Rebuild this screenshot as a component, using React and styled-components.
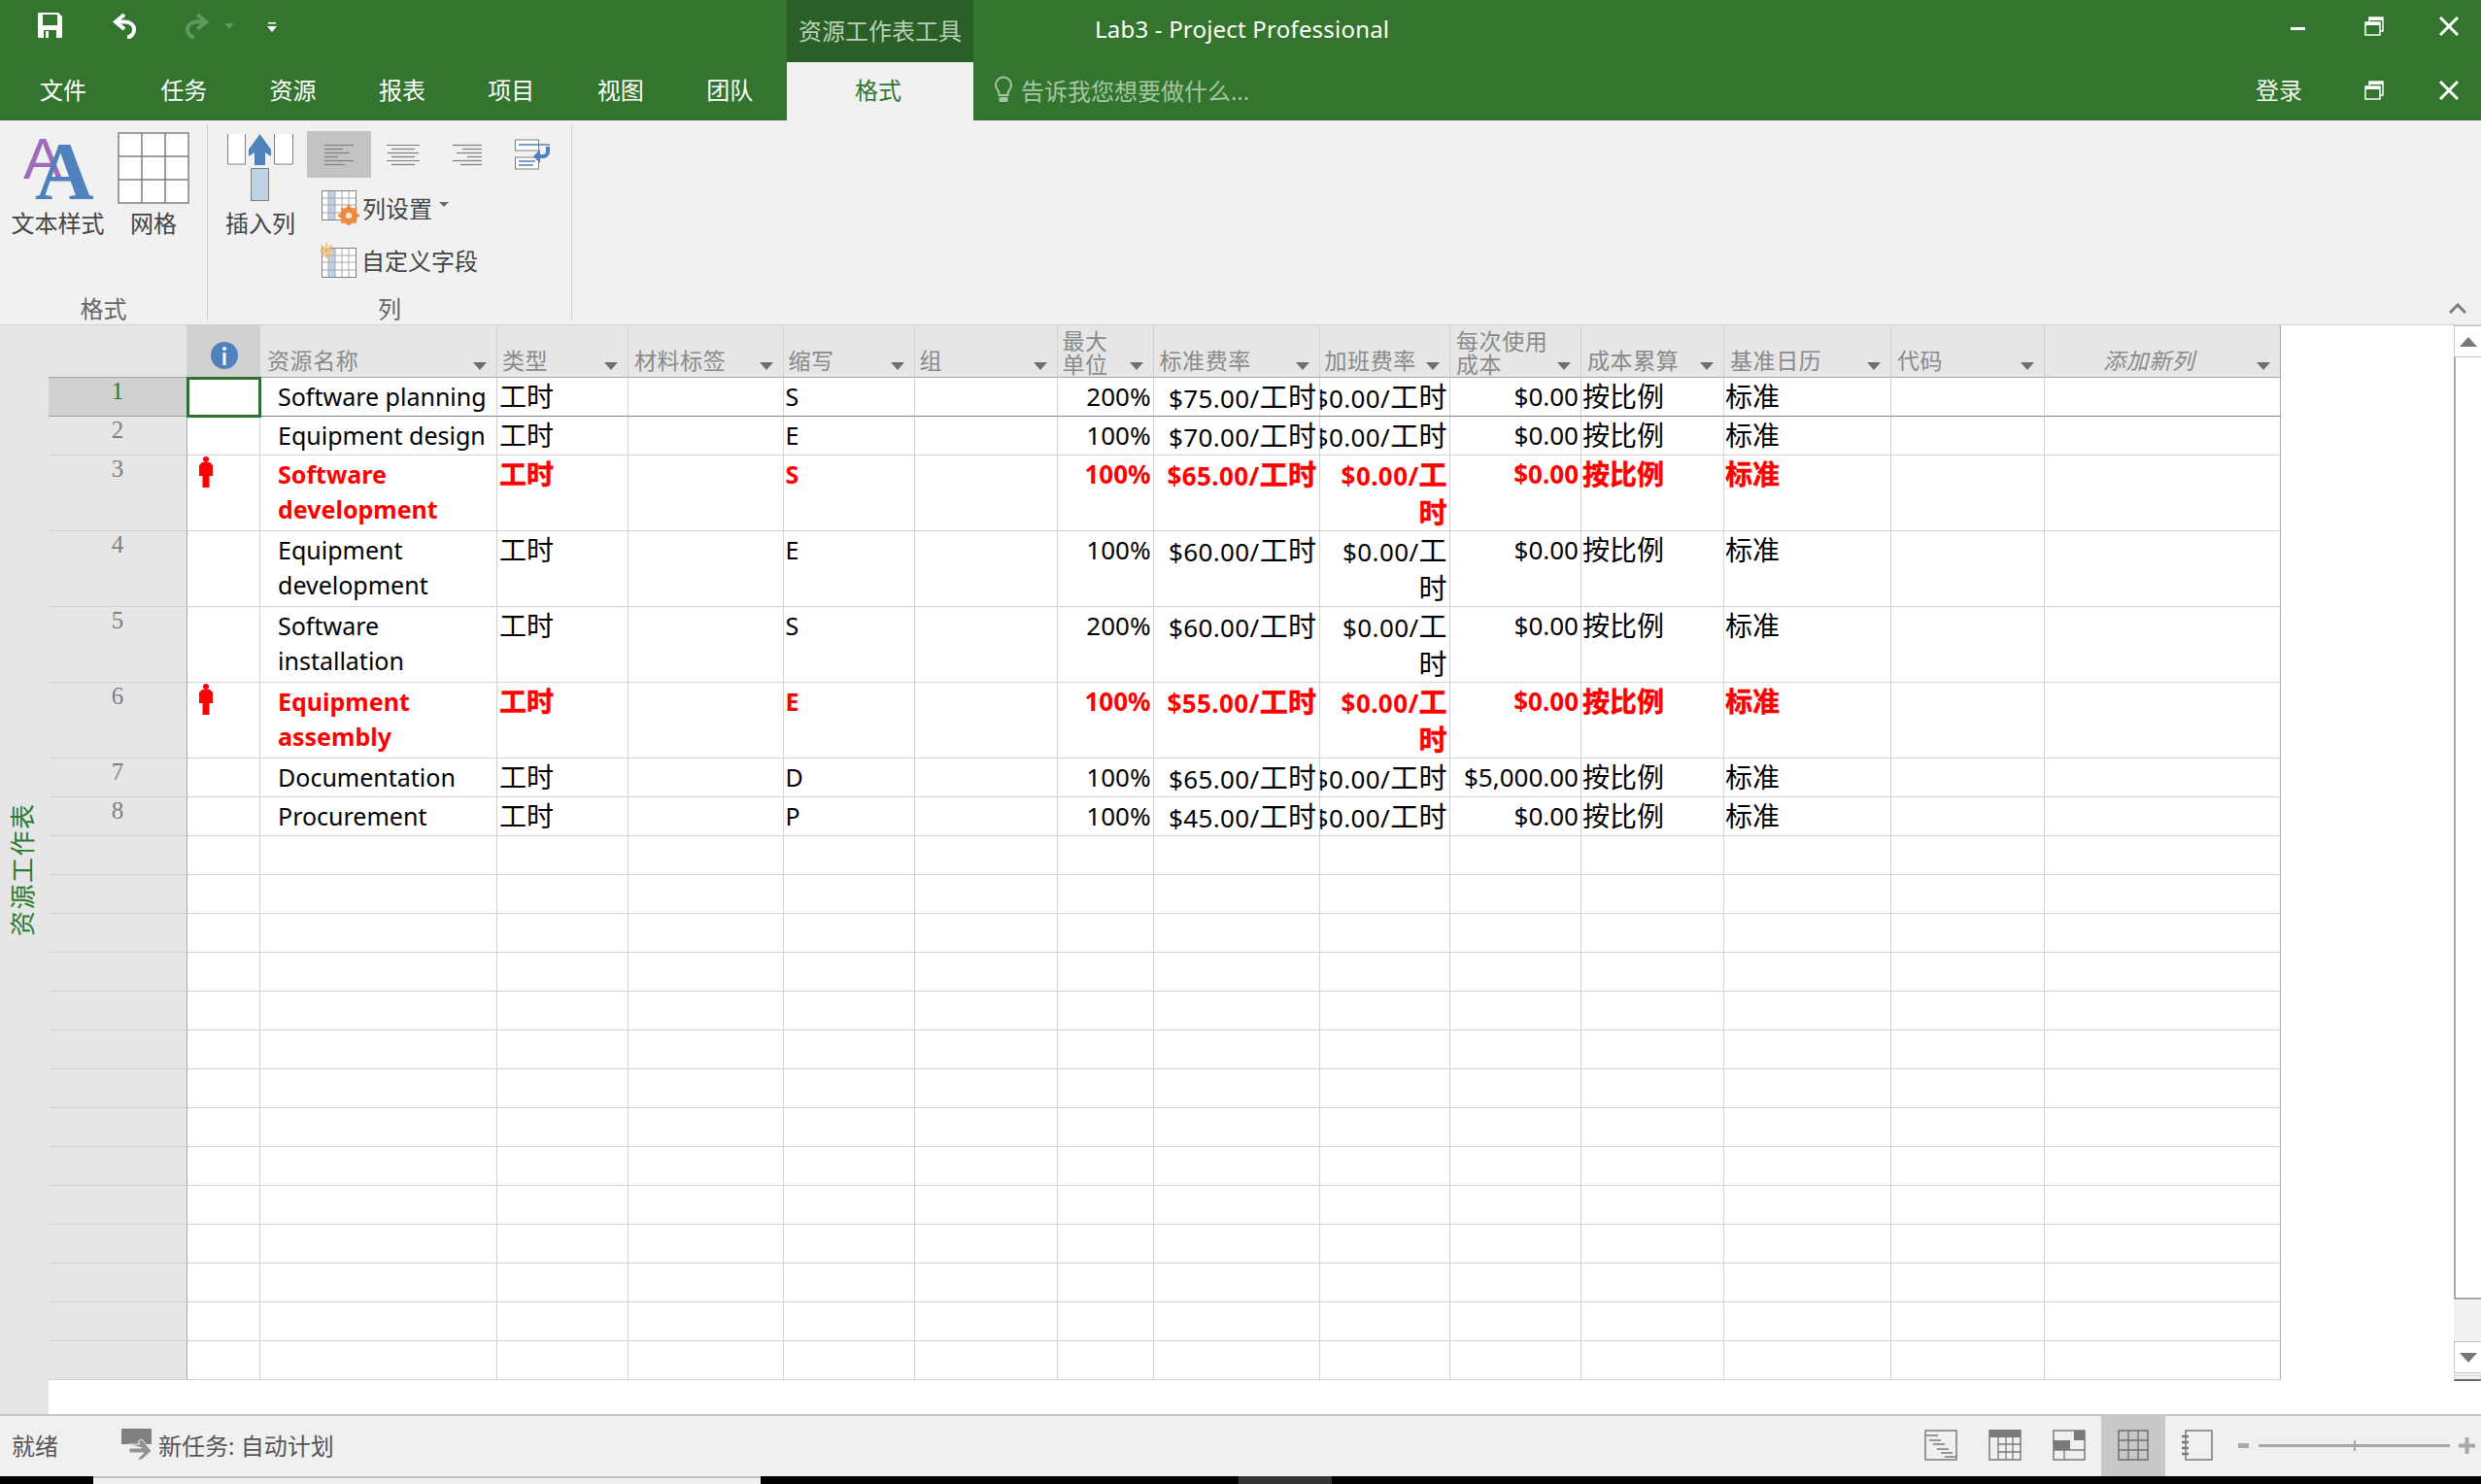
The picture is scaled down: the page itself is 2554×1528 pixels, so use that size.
import React from "react";
import styled, { createGlobalStyle } from "styled-components";

const FONT = `"Noto Sans", "Noto Sans CJK SC", sans-serif`;
const GREEN = "#33752f";
const COLS = "143px 75px 244px 135px 159.5px 135px 147px 99px 171px 134.5px 135px 147px 172px 158px 243px";

const GlobalStyle = createGlobalStyle`
  html, body { margin: 0; padding: 0; background: #fff; }
  * { box-sizing: border-box; }
`;

const Page = styled.div`
  width: 2554px;
  height: 1528px;
  display: flex;
  flex-direction: column;
  overflow: hidden;
  font-family: ${FONT};
  background: #fff;
`;

/* title bar */
const TitleBar = styled.div`
  height: 64px;
  flex: none;
  display: flex;
  background: ${GREEN};
  color: #fff;
`;

const Qat = styled.div`
  width: 810px;
  flex: none;
  display: flex;
  align-items: flex-start;
  padding: 13px 0 0 39px;
`;

const QatButton = styled.div`
  display: flex;
  margin-right: ${(p) => p.$gap}px;
  margin-top: ${(p) => p.$top || 0}px;
`;

const ContextTab = styled.div`
  width: 192px;
  flex: none;
  background: #2a5f28;
  color: #b9d2b7;
  font-size: 24px;
  line-height: 64px;
  text-align: center;
`;

const Title = styled.div`
  margin-left: 125px;
  font-size: 24px;
  letter-spacing: 0.2px;
  line-height: 60px;
  color: #fff;
`;

const WindowControls = styled.div`
  margin-left: auto;
  display: flex;
  align-items: flex-start;
  padding-top: 17px;
`;

const WinButton = styled.div`
  display: flex;
  width: ${(p) => p.$w}px;
  justify-content: center;
`;

/* tabs */
const TabBar = styled.div`
  height: 60px;
  flex: none;
  display: flex;
  align-items: stretch;
  background: ${GREEN};
  color: #fff;
`;

const Tab = styled.div`
  width: ${(p) => p.$w || 112.4}px;
  flex: none;
  padding-right: ${(p) => p.$pr || 0}px;
  font-size: 24px;
  line-height: 58px;
  text-align: center;
`;

const ActiveTab = styled(Tab)`
  width: 192px;
  margin-left: 2.6px;
  background: #f1f1f1;
  color: ${GREEN};
`;

const Search = styled.div`
  display: flex;
  align-items: center;
  gap: 8px;
  padding-left: 21px;
  color: #a6c6a4;
  font-size: 24px;
  padding-bottom: 4px;
`;

const SignIn = styled.div`
  margin-left: auto;
  font-size: 24px;
  line-height: 58px;
  color: #f2f7f1;
  margin-right: 30px;
`;

const TabControls = styled.div`
  display: flex;
  align-items: flex-start;
  padding-top: 19px;
`;

/* ribbon */
const Ribbon = styled.div`
  height: 211px;
  flex: none;
  position: relative;
  display: flex;
  padding: 4px 0;
  background: #f1f1f1;
  border-bottom: 1px solid #d2d2d2;
`;

const Group = styled.div`
  width: ${(p) => p.$w}px;
  flex: none;
  display: flex;
  flex-direction: column;
  border-right: 1px solid #d2d2d2;
`;

const GroupBody = styled.div`
  flex: 1;
  display: flex;
`;

const GroupLabel = styled.div`
  height: 32px;
  margin-bottom: -4px;
  font-size: 24px;
  line-height: 32px;
  text-align: center;
  color: #666;
`;

const LargeButton = styled.div`
  width: ${(p) => p.$w}px;
  flex: none;
  display: flex;
  flex-direction: column;
  align-items: center;
  padding-top: 8px;
  color: #444;
  font-size: 24px;
`;

const LargeIcon = styled.div`
  height: 73px;
  display: flex;
  align-items: center;
`;

const LargeLabel = styled.div`
  margin-top: 5px;
  line-height: 32px;
  white-space: nowrap;
`;

const ColumnTools = styled.div`
  display: flex;
  flex-direction: column;
  margin-left: -6px;
  padding-top: 7px;
`;

const AlignRow = styled.div`
  display: flex;
`;

const AlignButton = styled.div`
  width: 66px;
  height: 48px;
  display: flex;
  align-items: center;
  justify-content: center;
  padding-left: ${(p) => p.$pl || 0}px;
  background: ${(p) => (p.$active ? "#c3c3c3" : "transparent")};
`;

const SmallButton = styled.div`
  height: 35px;
  margin-top: ${(p) => p.$top}px;
  margin-left: ${(p) => p.$left}px;
  display: flex;
  align-items: center;
  gap: ${(p) => p.$gap}px;
  color: #444;
  font-size: 24px;
  white-space: nowrap;
`;

const Caret = styled.span`
  width: 0;
  height: 0;
  margin-left: 4px;
  margin-bottom: 6px;
  border-left: 5px solid transparent;
  border-right: 5px solid transparent;
  border-top: 5px solid #666;
`;

const Collapse = styled.svg`
  position: absolute;
  right: 15px;
  bottom: 11px;
`;

/* main area */
const Main = styled.div`
  flex: 1;
  min-height: 0;
  display: flex;
  background: #fff;
`;

const Sidebar = styled.div`
  width: 50px;
  flex: none;
  display: flex;
  justify-content: center;
  padding: 490px 4px 0 0;
  background: #e6e6e6;
`;

const SidebarText = styled.div`
  writing-mode: vertical-rl;
  text-orientation: sideways;
  transform: rotate(180deg);
  height: 139px;
  font-size: 26px;
  line-height: 27px;
  letter-spacing: 1.5px;
  white-space: nowrap;
  color: #2f7a2c;
`;

const Sheet = styled.div`
  flex: 1;
  min-width: 0;
`;

const Row = styled.div`
  display: grid;
  grid-template-columns: ${COLS};
  width: 2298px;
  height: ${(p) => p.$h}px;
`;

const HeaderCell = styled.div`
  position: relative;
  display: flex;
  align-items: flex-end;
  padding: 0 0 ${(p) => (p.$lines > 1 ? 1 : 5)}px ${(p) => p.$pl || 6}px;
  background: ${(p) => (p.$dark ? "#d1d1d1" : "#e6e6e6")};
  border-right: 1px solid ${(p) => (p.$edge ? "#a8a8a8" : "#d2d2d2")};
  border-bottom: 1px solid #a4a4a4;
  color: #8a8a8a;
  font-size: 23px;
  line-height: 24px;
  letter-spacing: 0.6px;
  font-style: ${(p) => (p.$italic ? "italic" : "normal")};
`;

const HeaderLine = styled.span`
  display: block;
`;

const InfoSlot = styled.span`
  display: flex;
  margin-bottom: 3px;
`;

const FilterArrow = styled.span`
  position: absolute;
  right: 10px;
  bottom: 7px;
  width: 0;
  height: 0;
  border-left: 7px solid transparent;
  border-right: 7px solid transparent;
  border-top: 8px solid #6d6e71;
`;

const RowHead = styled.div`
  background: ${(p) => (p.$selected ? "#d1d1d1" : "#e6e6e6")};
  border-right: 1px solid #a8a8a8;
  border-bottom: 1px solid ${(p) => (p.$selected ? "#a0a0a0" : "#d2d2d2")};
  color: ${(p) => (p.$selected ? "#2f7a2c" : "#7f7f7f")};
  font-family: "Liberation Serif", serif;
  font-size: 25px;
  line-height: 28px;
  text-align: center;
`;

const Cell = styled.div`
  min-width: 0;
  overflow: hidden;
  display: ${(p) => (p.$wrap ? "block" : "flex")};
  justify-content: ${(p) => (p.$right ? "flex-end" : "flex-start")};
  padding: 1px ${(p) => p.$pr ?? 0}px 0 ${(p) => p.$pl ?? 2}px;
  border-right: 1px solid ${(p) => (p.$edge ? "#a8a8a8" : "#d2d2d2")};
  border-bottom: 1px solid ${(p) => (p.$selected ? "#808080" : "#d2d2d2")};
  color: ${(p) => (p.$alert ? "#ff0000" : "#000")};
  font-weight: ${(p) => (p.$alert ? 700 : 400)};
  font-size: ${(p) => (p.$num ? 26 : 25)}px;
  line-height: ${(p) => p.$lh || 37}px;
  text-align: ${(p) => (p.$right ? "right" : "left")};
  white-space: ${(p) => (p.$wrap ? "normal" : "nowrap")};
`;

const IndicatorCell = styled.div`
  padding: 1px 0 0 11px;
  border-right: 1px solid #d2d2d2;
  border-bottom: 1px solid ${(p) => (p.$selected ? "#808080" : "#d2d2d2")};
  ${(p) => p.$selected && `
    position: relative;
    z-index: 1;
    outline: 3px solid #2f7030;
    outline-offset: -2px;
  `}
  line-height: 0;
`;

const Cjk = styled.span`
  font-size: ${(p) => p.$size || 28}px;
  ${(p) => p.$alert && "-webkit-text-stroke: 0.5px #ff0000;"}
`;

const Rate = styled.span`
  letter-spacing: 0.4px;
`;

const Scrollbar = styled.div`
  width: 28px;
  flex: none;
  display: flex;
  flex-direction: column;
  background: #f1f1f1;
`;

const ScrollButton = styled.div`
  height: 33px;
  flex: none;
  display: flex;
  align-items: center;
  justify-content: center;
  background: #fff;
  border: 1px solid #c4c4c4;
  border-right: 0;
`;

const ScrollThumb = styled.div`
  height: 970px;
  flex: none;
  background: #fff;
  border-left: 2px solid #a8a8a8;
  border-bottom: 2px solid #a8a8a8;
`;

const ScrollGap = styled.div`
  flex: 1;
`;

const ScrollEnd = styled.div`
  height: 6px;
  margin-top: 2px;
  flex: none;
  background: #f1f1f1;
  border: 1px solid #d2d2d2;
  border-bottom: 2px solid #666;
`;

const WhiteTail = styled.div`
  height: 34px;
  flex: none;
  background: #fff;
`;

/* status bar */
const StatusBar = styled.div`
  height: 64px;
  flex: none;
  display: flex;
  align-items: stretch;
  background: #f0f0f0;
  border-top: 2px solid #c6c6c6;
  color: #555;
  font-size: 24px;
`;

const StatusText = styled.div`
  display: flex;
  align-items: center;
  padding-bottom: 4px;
  margin-left: ${(p) => p.$ml}px;
  gap: 5px;
`;

const ViewButtons = styled.div`
  margin-left: auto;
  display: flex;
`;

const ViewButton = styled.div`
  width: 66px;
  display: flex;
  align-items: center;
  justify-content: center;
  padding-bottom: 2px;
  background: ${(p) => (p.$active ? "#c8c8c8" : "transparent")};
`;

const Zoomer = styled.div`
  width: 259px;
  flex: none;
  display: flex;
  align-items: center;
  padding: 0 6px 2px 9px;
`;

const ZoomMinus = styled.span`
  width: 11px;
  height: 5px;
  flex: none;
  background: #a8a8a8;
`;

const ZoomTrack = styled.div`
  position: relative;
  width: 197px;
  height: 3px;
  flex: none;
  margin: 0 9px 0 10px;
  background: #a8a8a8;
`;

const ZoomTick = styled.span`
  position: absolute;
  left: 98px;
  top: -4px;
  width: 2px;
  height: 11px;
  background: #a8a8a8;
`;

const TaskStrip = styled.div`
  height: 8px;
  flex: none;
  display: flex;
  background: #000;
`;

const TaskWindow = styled.div`
  margin-left: 96px;
  width: 687px;
  flex: none;
  background: #f0f0f0;
  border-top: 2px solid #c0c0c0;
`;

const TaskApp = styled.div`
  margin-left: 492px;
  width: 96px;
  flex: none;
  background: #333;
`;

/* drawings */
const SaveIcon = () => (
  <svg width="25" height="26" viewBox="0 0 25 26">
    <path d="M1 0h20l4 4v21a1 1 0 0 1-1 1H1a1 1 0 0 1-1-1V1a1 1 0 0 1 1-1z" fill="#fff" />
    <rect x="5" y="2" width="15" height="11" fill="#33752f" />
    <rect x="6" y="18" width="13" height="8" fill="#33752f" />
    <rect x="8" y="19" width="3" height="7" fill="#fff" />
  </svg>
);

const UndoIcon = ({ flip, color }) => (
  <svg width="27" height="27" viewBox="0 0 27 27">
    <g transform={flip ? "matrix(-1 0 0 1 27 0)" : undefined}>
      <path d="M13 2 4 9.5l9 7.5" fill="none" stroke={color} strokeWidth="4" />
      <path d="M5 9.5h9a9 7.5 0 0 1 9 8 8 8 0 0 1-7 8" fill="none" stroke={color} strokeWidth="4" />
    </g>
  </svg>
);

const SmallDown = ({ color }) => (
  <svg width="10" height="6" viewBox="0 0 10 6">
    <path d="M0 0h10L5 6z" fill={color} />
  </svg>
);

const CustomizeIcon = () => (
  <svg width="10" height="10" viewBox="0 0 10 10">
    <rect x="1" y="0" width="8" height="1.6" fill="#fff" />
    <path d="M0 4h10L5 10z" fill="#fff" />
  </svg>
);

const RestoreIcon = () => (
  <svg width="20" height="20" viewBox="0 0 20 20">
    <path d="M5 5V1h14v14h-3" fill="none" stroke="#fff" strokeWidth="1.5" />
    <rect x="5" y="1" width="14" height="3" fill="#fff" />
    <rect x="1" y="6" width="15" height="13" fill="none" stroke="#fff" strokeWidth="1.5" />
    <rect x="1" y="6" width="15" height="3" fill="#fff" />
  </svg>
);

const CloseIcon = () => (
  <svg width="20" height="20" viewBox="0 0 20 20">
    <path d="M1 1l18 18M19 1 1 19" stroke="#fff" strokeWidth="3" />
  </svg>
);

const MinimizeIcon = () => (
  <svg width="16" height="20" viewBox="0 0 16 20">
    <rect x="0" y="11" width="15" height="3" fill="#fff" />
  </svg>
);

const BulbIcon = () => (
  <svg width="20" height="28" viewBox="0 0 20 28">
    <path d="M10 1.5a8 8 0 0 0-8 8c0 3.5 2.5 5 3.5 8.5v2h9v-2C15.5 14.5 18 13 18 9.5a8 8 0 0 0-8-8z" fill="none" stroke="#a6c6a4" strokeWidth="2" />
    <rect x="5.5" y="22" width="9" height="5" rx="1" fill="#a6c6a4" />
  </svg>
);

const TextStyleIcon = () => (
  <svg width="72" height="66" viewBox="0 0 72 66" overflow="visible">
    <text x="0" y="44" fontFamily="Liberation Sans, sans-serif" fontSize="60" fill="#9e6cbc">A</text>
    <text x="12" y="65" fontFamily="Liberation Serif, serif" fontWeight="700" fontSize="84" fill="#4f81bd">A</text>
  </svg>
);

const GridIcon = () => (
  <svg width="74" height="74" viewBox="0 0 74 74">
    <rect x="1" y="1" width="72" height="72" fill="#fff" stroke="#808080" strokeWidth="1.5" />
    <path d="M25 1v72M49 1v72M1 25h72M1 49h72" stroke="#808080" strokeWidth="1.5" />
  </svg>
);

const InsertColumnIcon = () => (
  <svg width="68" height="69" viewBox="0 0 68 69">
    <path d="M.5 0v31h18V0M48.5 0v31h19V0" fill="#fff" stroke="#808080" />
    <path d="M33.5 0 45 16v7l-6-4v13H28V19l-6 4v-7z" fill="#4f81bd" />
    <rect x="24.5" y="35.5" width="18" height="33" fill="#bed1e5" stroke="#808080" />
  </svg>
);

const AlignIcon = ({ lines, width }) => (
  <svg width={width} height="24" viewBox={`0 0 ${width} 24`}>
    {lines.map(([x1, x2], i) => (
      <line key={i} x1={x1} x2={x2} y1={2.5 + i * 4} y2={2.5 + i * 4} stroke="#7f7f7f" strokeWidth="1.2" />
    ))}
  </svg>
);

const WrapIcon = () => (
  <svg width="40" height="32" viewBox="0 0 40 32">
    <rect x="1.5" y="1" width="24" height="11" fill="#fff" stroke="#808080" />
    <rect x="1.5" y="19" width="24" height="12" fill="#fff" stroke="#808080" />
    <path d="M5 6h32M5 23h17M5 27h15" stroke="#4f81bd" strokeWidth="1.3" />
    <path d="M35 8v5a5 5 0 0 1-5 5h-7" fill="none" stroke="#4f81bd" strokeWidth="4" />
    <path d="M27 11l-7 7 7 7z" fill="#4f81bd" />
  </svg>
);

const MiniTable = () => (
  <g>
    <rect x="0.5" y="0.5" width="35" height="30" fill="#fff" stroke="#808080" />
    <rect x="7" y="1" width="7" height="29" fill="#bed1e5" />
    <path d="M7 1v29M14 1v29M21 1v29M28 1v29M1 8h34M1 15h34M1 23h34" stroke="#a8a8a8" strokeWidth="1" />
  </g>
);

const ColumnSettingsIcon = () => (
  <svg width="39" height="36" viewBox="0 0 39 36">
    <MiniTable />
    <circle cx="28" cy="26" r="6.5" fill="none" stroke="#ed8b3a" strokeWidth="5" />
    <path d="M28 15v22M17 26h22M20.5 18.5l15 15M35.5 18.5l-15 15" stroke="#ed8b3a" strokeWidth="3" />
    <circle cx="28" cy="26" r="3" fill="#f1f1f1" />
  </svg>
);

const CustomFieldsIcon = () => (
  <svg width="38" height="36" viewBox="0 0 38 36">
    <g transform="translate(2 5)"><MiniTable /></g>
    <circle cx="7" cy="8" r="4" fill="#f7e4b4" />
    <path d="M7 0v16M-1 8h16M1.5 2.5l11 11M12.5 2.5l-11 11" stroke="#edbc6a" strokeWidth="1.5" />
  </svg>
);

const InfoIcon = () => (
  <svg width="28" height="28" viewBox="0 0 28 28">
    <circle cx="14" cy="14" r="14" fill="#4f81bd" />
    <circle cx="14" cy="7" r="2" fill="#fff" />
    <rect x="12.5" y="11" width="3" height="13" fill="#fff" />
  </svg>
);

const PersonIcon = () => (
  <svg width="16" height="32" viewBox="0 0 16 32">
    <circle cx="8" cy="3" r="3" fill="#ff0000" />
    <path d="M4 6h8l3 3v11h-3.5v12h-7V20H1V9z" fill="#ff0000" />
  </svg>
);

const ScrollArrow = ({ down }) => (
  <svg width="18" height="10" viewBox="0 0 18 10">
    <path d={down ? "M0 0h18L9 10z" : "M0 10h18L9 0z"} fill="#777" />
  </svg>
);

const NewTaskIcon = () => (
  <svg width="33" height="32" viewBox="0 0 33 32">
    <path d="M0 0h31v16H0z" fill="#808080" />
    <path d="M8 16h11l-2-3 4-2 10 12-10 9h-5l7-7H8v-5h13z" fill="#929292" stroke="#f0f0f0" strokeWidth="1" />
  </svg>
);

const GanttViewIcon = () => (
  <svg width="34" height="32" viewBox="0 0 34 32">
    <rect x="1" y="1" width="32" height="30" fill="none" stroke="#7a7a7a" strokeWidth="1.5" />
    <path d="M2 6h12M5 11h12M9 15h12M13 20h12M17 24h12M21 28h12" stroke="#7a7a7a" strokeWidth="1.3" />
  </svg>
);

const TaskViewIcon = () => (
  <svg width="34" height="32" viewBox="0 0 34 32">
    <rect x="1" y="1" width="32" height="30" fill="none" stroke="#7a7a7a" strokeWidth="1.5" />
    <rect x="1" y="0" width="32" height="8" fill="#7a7a7a" />
    <path d="M10 8v23M18 8v23M25 8v23M10 15h23M10 23h23" stroke="#7a7a7a" strokeWidth="1.3" />
  </svg>
);

const TeamViewIcon = () => (
  <svg width="34" height="32" viewBox="0 0 34 32">
    <rect x="1" y="1" width="32" height="30" fill="none" stroke="#7a7a7a" strokeWidth="1.5" />
    <rect x="22" y="1" width="11" height="10" fill="#7a7a7a" />
    <rect x="1" y="11" width="17" height="10" fill="#7a7a7a" />
    <path d="M1 21h32M12 21v10" stroke="#7a7a7a" strokeWidth="1.3" />
  </svg>
);

const SheetViewIcon = () => (
  <svg width="32" height="32" viewBox="0 0 32 32">
    <rect x="1" y="1" width="30" height="30" fill="none" stroke="#6e6e6e" strokeWidth="1.5" />
    <path d="M11 1v30M21 1v30M1 11h30M1 21h30" stroke="#6e6e6e" strokeWidth="1.3" />
  </svg>
);

const FormViewIcon = () => (
  <svg width="32" height="32" viewBox="0 0 32 32">
    <rect x="4" y="1" width="27" height="30" fill="none" stroke="#7a7a7a" strokeWidth="1.5" />
    <path d="M0 7h7M0 13h7M0 19h7M0 25h7" stroke="#7a7a7a" strokeWidth="2.5" />
  </svg>
);

const PlusIcon = () => (
  <svg width="17" height="17" viewBox="0 0 17 17">
    <path d="M0 6.5h17v4H0zM6.5 0h4v17h-4z" fill="#a8a8a8" />
  </svg>
);

/* data */
const headers = [
  { label: ["资源名称"], pl: 7 },
  { label: ["类型"], pl: 5 },
  { label: ["材料标签"], pl: 6 },
  { label: ["缩写"], pl: 5 },
  { label: ["组"], pl: 5 },
  { label: ["最大", "单位"], pl: 5 },
  { label: ["标准费率"], pl: 6 },
  { label: ["加班费率"], pl: 5 },
  { label: ["每次使用", "成本"], pl: 6 },
  { label: ["成本累算"], pl: 6 },
  { label: ["基准日历"], pl: 6 },
  { label: ["代码"], pl: 6 },
  { label: ["添加新列"], pl: 60, italic: true, edge: true },
];

const resources = [
  { name: "Software planning", abbr: "S", max: "200%", rate: "$75.00", cost: "$0.00" },
  { name: "Equipment design", abbr: "E", max: "100%", rate: "$70.00", cost: "$0.00" },
  { name: "Software development", abbr: "S", max: "100%", rate: "$65.00", cost: "$0.00", alert: true, tall: true },
  { name: "Equipment development", abbr: "E", max: "100%", rate: "$60.00", cost: "$0.00", tall: true },
  { name: "Software installation", abbr: "S", max: "200%", rate: "$60.00", cost: "$0.00", tall: true },
  { name: "Equipment assembly", abbr: "E", max: "100%", rate: "$55.00", cost: "$0.00", alert: true, tall: true },
  { name: "Documentation", abbr: "D", max: "100%", rate: "$65.00", cost: "$5,000.00" },
  { name: "Procurement", abbr: "P", max: "100%", rate: "$45.00", cost: "$0.00" },
];

const emptyRows = Array.from({ length: 14 }, (_, i) => i);

const ResourceRow = ({ row, index }) => {
  const selected = index === 0;
  const common = { $alert: row.alert, $selected: selected };
  return (
    <Row $h={row.tall ? 78 : 40}>
      <RowHead $selected={selected}>{index + 1}</RowHead>
      <IndicatorCell $selected={selected}>{row.alert && <PersonIcon />}</IndicatorCell>
      <Cell {...common} $wrap={row.tall} $pl={18} $lh={36}>{row.name}</Cell>
      <Cell {...common} $pl={2}><Cjk $alert={row.alert}>工时</Cjk></Cell>
      <Cell {...common} />
      <Cell {...common}>{row.abbr}</Cell>
      <Cell {...common} />
      <Cell {...common} $num $right $pr={2}>{row.max}</Cell>
      <Cell {...common} $num $right $pr={2} $pl={0}>
        <Rate>{row.rate}/<Cjk $size={29} $alert={row.alert}>工时</Cjk></Rate>
      </Cell>
      <Cell {...common} $num $right $wrap={row.tall} $pr={2} $pl={0} $lh={38}>
        <Rate>$0.00/<Cjk $size={29} $alert={row.alert}>工时</Cjk></Rate>
      </Cell>
      <Cell {...common} $num $right $pr={2} $pl={0}>{row.cost}</Cell>
      <Cell {...common} $pl={1}><Cjk $alert={row.alert}>按比例</Cjk></Cell>
      <Cell {...common} $pl={1}><Cjk $alert={row.alert}>标准</Cjk></Cell>
      <Cell {...common} />
      <Cell {...common} $edge />
    </Row>
  );
};

const EmptyRow = () => (
  <Row $h={40}>
    <RowHead />
    {Array.from({ length: 14 }, (_, i) => (
      <Cell key={i} $edge={i === 13} />
    ))}
  </Row>
);

export default function App() {
  return (
    <Page>
      <GlobalStyle />
      <TitleBar>
        <Qat>
          <QatButton $gap={51}><SaveIcon /></QatButton>
          <QatButton $gap={47}><UndoIcon color="#fff" /></QatButton>
          <QatButton $gap={15}><UndoIcon flip color="#5f9a5c" /></QatButton>
          <QatButton $gap={34} $top={11}><SmallDown color="#5f9a5c" /></QatButton>
          <QatButton $gap={0} $top={10}><CustomizeIcon /></QatButton>
        </Qat>
        <ContextTab>资源工作表工具</ContextTab>
        <Title>Lab3 - Project Professional</Title>
        <WindowControls>
          <WinButton $w={68}><MinimizeIcon /></WinButton>
          <WinButton $w={88}><RestoreIcon /></WinButton>
          <WinButton $w={66}><CloseIcon /></WinButton>
        </WindowControls>
      </TitleBar>

      <TabBar>
        <Tab $w={133} $pr={3}>文件</Tab>
        <Tab>任务</Tab>
        <Tab>资源</Tab>
        <Tab>报表</Tab>
        <Tab>项目</Tab>
        <Tab>视图</Tab>
        <Tab>团队</Tab>
        <ActiveTab $pr={4}>格式</ActiveTab>
        <Search><BulbIcon />告诉我您想要做什么...</Search>
        <SignIn>登录</SignIn>
        <TabControls>
          <WinButton $w={88}><RestoreIcon /></WinButton>
          <WinButton $w={66}><CloseIcon /></WinButton>
        </TabControls>
      </TabBar>

      <Ribbon>
        <Group $w={214}>
          <GroupBody>
            <LargeButton $w={119}>
              <LargeIcon><TextStyleIcon /></LargeIcon>
              <LargeLabel>文本样式</LargeLabel>
            </LargeButton>
            <LargeButton $w={78}>
              <LargeIcon><GridIcon /></LargeIcon>
              <LargeLabel>网格</LargeLabel>
            </LargeButton>
          </GroupBody>
          <GroupLabel>格式</GroupLabel>
        </Group>
        <Group $w={375}>
          <GroupBody>
            <LargeButton $w={108}>
              <LargeIcon><InsertColumnIcon /></LargeIcon>
              <LargeLabel>插入列</LargeLabel>
            </LargeButton>
            <ColumnTools>
              <AlignRow>
                <AlignButton $active>
                  <AlignIcon width={32} lines={[[1, 31], [1, 20], [1, 27], [1, 15], [1, 31], [1, 22]]} />
                </AlignButton>
                <AlignButton>
                  <AlignIcon width={34} lines={[[0, 34], [5, 29], [1, 33], [5, 29], [0, 34], [5, 29]]} />
                </AlignButton>
                <AlignButton>
                  <AlignIcon width={32} lines={[[1, 31], [11, 31], [5, 31], [16, 31], [1, 31], [9, 31]]} />
                </AlignButton>
                <AlignButton $pl={4}><WrapIcon /></AlignButton>
              </AlignRow>
              <SmallButton $top={13} $left={15} $gap={3}>
                <ColumnSettingsIcon />
                列设置
                <Caret />
              </SmallButton>
              <SmallButton $top={19} $left={13} $gap={5}>
                <CustomFieldsIcon />
                自定义字段
              </SmallButton>
            </ColumnTools>
          </GroupBody>
          <GroupLabel>列</GroupLabel>
        </Group>
        <Collapse width="18" height="11" viewBox="0 0 18 11">
          <path d="M1 10 9 2l8 8" fill="none" stroke="#7f7f7f" strokeWidth="3" />
        </Collapse>
      </Ribbon>

      <Main>
        <Sidebar>
          <SidebarText>资源工作表</SidebarText>
        </Sidebar>
        <Sheet>
          <Row $h={54}>
            <HeaderCell />
            <HeaderCell $dark $pl={24}>
              <InfoSlot><InfoIcon /></InfoSlot>
            </HeaderCell>
            {headers.map((h) => (
              <HeaderCell key={h.label[0]} $pl={h.pl} $lines={h.label.length} $italic={h.italic} $edge={h.edge}>
                <span>
                  {h.label.map((line) => (
                    <HeaderLine key={line}>{line}</HeaderLine>
                  ))}
                </span>
                <FilterArrow />
              </HeaderCell>
            ))}
          </Row>
          {resources.map((row, i) => (
            <ResourceRow key={row.name} row={row} index={i} />
          ))}
          {emptyRows.map((i) => (
            <EmptyRow key={i} />
          ))}
        </Sheet>
        <Scrollbar>
          <ScrollButton><ScrollArrow /></ScrollButton>
          <ScrollThumb />
          <ScrollGap />
          <ScrollButton><ScrollArrow down /></ScrollButton>
          <ScrollEnd />
          <WhiteTail />
        </Scrollbar>
      </Main>

      <StatusBar>
        <StatusText $ml={12}>就绪</StatusText>
        <StatusText $ml={65}><NewTaskIcon />新任务: 自动计划</StatusText>
        <ViewButtons>
          <ViewButton><GanttViewIcon /></ViewButton>
          <ViewButton><TaskViewIcon /></ViewButton>
          <ViewButton><TeamViewIcon /></ViewButton>
          <ViewButton $active><SheetViewIcon /></ViewButton>
          <ViewButton><FormViewIcon /></ViewButton>
        </ViewButtons>
        <Zoomer>
          <ZoomMinus />
          <ZoomTrack><ZoomTick /></ZoomTrack>
          <PlusIcon />
        </Zoomer>
      </StatusBar>
      <TaskStrip>
        <TaskWindow />
        <TaskApp />
      </TaskStrip>
    </Page>
  );
}
